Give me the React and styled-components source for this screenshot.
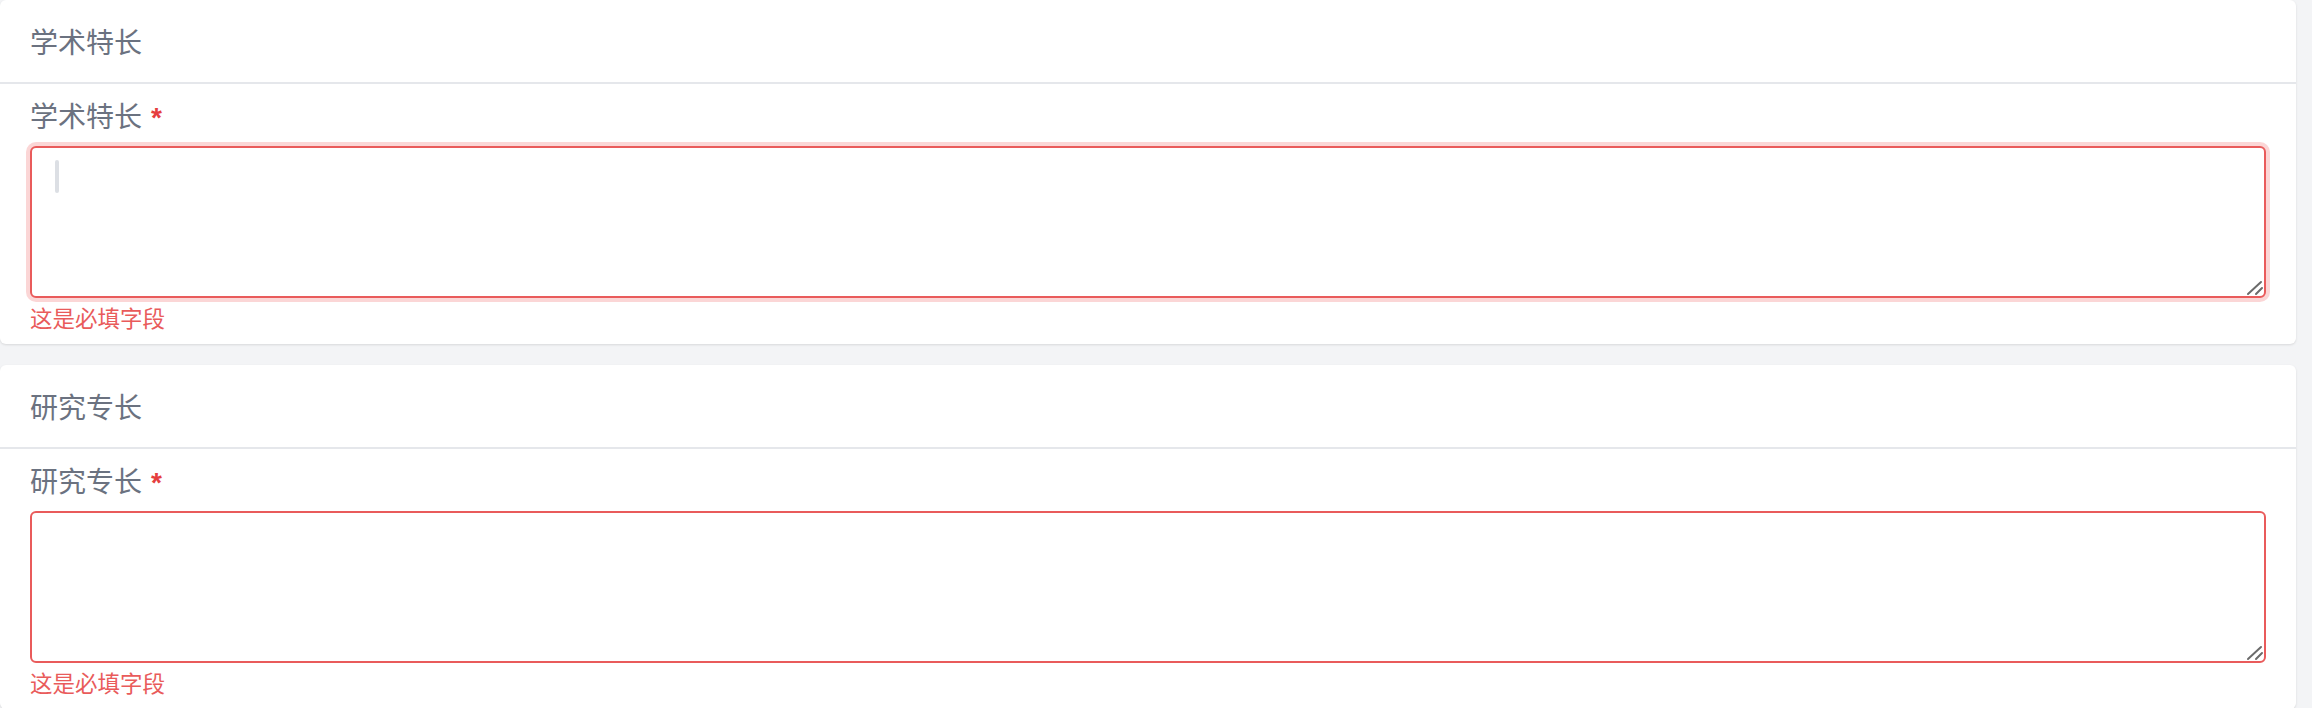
import React from "react";
import styled, { createGlobalStyle } from "styled-components";

const GlobalStyle = createGlobalStyle`
  html, body {
    margin: 0;
    padding: 0;
    background: #f3f4f6;
    font-family: "Noto Sans CJK SC", "Noto Sans", sans-serif;
  }
  * { box-sizing: border-box; }
`;

const Page = styled.div`
  display: flex;
  flex-direction: column;
  gap: 21px;
  padding: 0 16px 0 0;
  width: 2312px;
  min-height: 708px;
  background: #f3f4f6;
`;

const Card = styled.section`
  background: #ffffff;
  border-radius: 6px;
  box-shadow: 0 1px 3px rgba(0, 0, 0, 0.08), 0 1px 2px rgba(0, 0, 0, 0.04);
  display: flex;
  flex-direction: column;
`;

const CardHeader = styled.div`
  height: 84px;
  display: flex;
  align-items: center;
  padding: 0 30px;
  border-bottom: 2px solid #e5e7eb;
`;

const CardTitle = styled.h2`
  margin: 0;
  font-size: 28px;
  font-weight: 400;
  line-height: 1;
  color: #6b7280;
`;

const CardBody = styled.div`
  padding: 10px 30px 11px;
  display: flex;
  flex-direction: column;
`;

const Label = styled.label`
  font-size: 28px;
  line-height: 42px;
  color: #6b7280;
  margin-bottom: 7px;
  display: flex;
  align-items: baseline;
`;

const Required = styled.span`
  color: #e53e3e;
  font-family: "Liberation Sans", Arial, sans-serif;
  font-size: 28px;
  font-weight: 700;
  margin-left: 9px;
`;

const FieldWrap = styled.div`
  position: relative;
  display: flex;
`;

const TextArea = styled.textarea`
  width: 100%;
  height: 152px;
  border: 2px solid #e95b5b;
  border-radius: 6px;
  padding: 12px 20px;
  font-family: "Noto Sans CJK SC", "Noto Sans", sans-serif;
  font-size: 28px;
  color: #374151;
  background: #ffffff;
  outline: none;
  resize: none;
  box-shadow: ${(p) => (p.$focused ? "0 0 0 4px rgba(239, 68, 68, 0.22)" : "none")};
  display: block;
`;

const Caret = styled.span`
  position: absolute;
  left: 25px;
  top: 14px;
  width: 4px;
  height: 33px;
  border-radius: 2px;
  background: #dcdfe4;
  pointer-events: none;
`;

const Grip = styled.svg`
  position: absolute;
  right: 0;
  bottom: 0;
  width: 20px;
  height: 20px;
  pointer-events: none;
`;

const ErrorText = styled.div`
  margin-top: 3px;
  font-size: 22.5px;
  line-height: 32px;
  color: #e95b5b;
`;

function FieldCard({ title, focused }) {
  return (
    <Card>
      <CardHeader>
        <CardTitle>{title}</CardTitle>
      </CardHeader>
      <CardBody>
        <Label>
          {title}
          <Required>*</Required>
        </Label>
        <FieldWrap>
          <TextArea $focused={focused} aria-label={title} />
          {focused && <Caret />}
          <Grip viewBox="0 0 20 20">
            <path d="M2 16 L15 4 M10 16 L16 10" stroke="#6b6b6b" strokeWidth="2" strokeLinecap="round" fill="none" />
          </Grip>
        </FieldWrap>
        <ErrorText>这是必填字段</ErrorText>
      </CardBody>
    </Card>
  );
}

export default function App() {
  return (
    <>
      <GlobalStyle />
      <Page>
        <FieldCard title="学术特长" focused />
        <FieldCard title="研究专长" />
      </Page>
    </>
  );
}
